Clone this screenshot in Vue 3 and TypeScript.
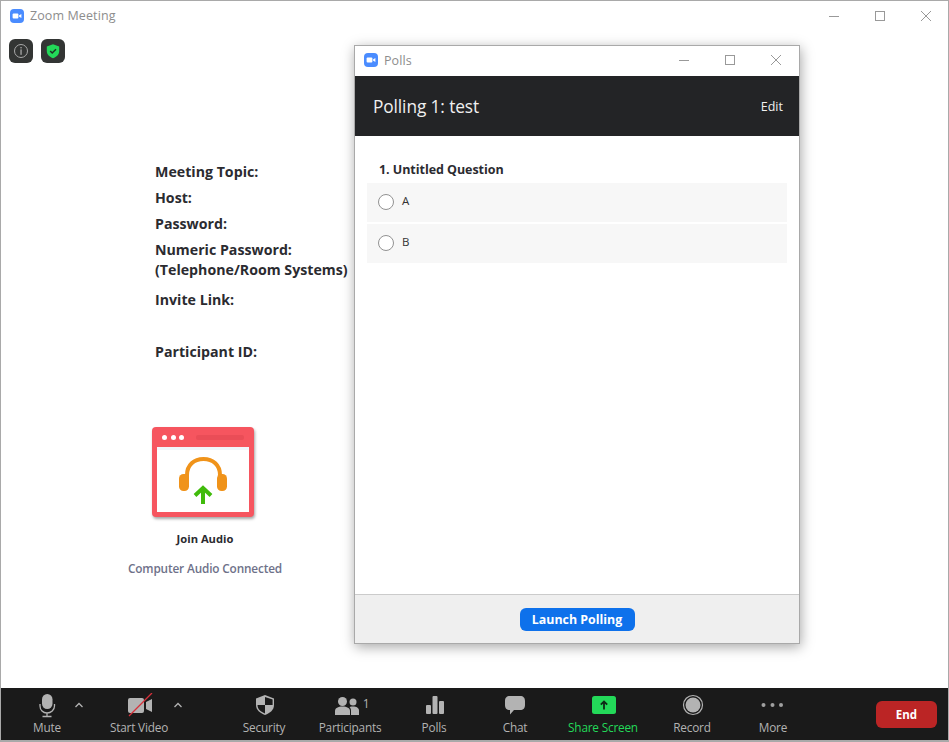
<script setup lang="ts">
const infoRows = [
  { text: 'Meeting Topic:', cls: 'r-topic' },
  { text: 'Host:', cls: 'r-std' },
  { text: 'Password:', cls: 'r-std' },
  { text: 'Numeric Password:', cls: 'r-std' },
  { text: '(Telephone/Room Systems)', cls: 'r-tel' },
  { text: 'Invite Link:', cls: 'r-invite' },
  { text: 'Participant ID:', cls: 'r-part' },
]
const options = ['A', 'B']
</script>

<template>
  <div class="win">
    <header class="titlebar">
      <svg class="logo" viewBox="0 0 14 14"><rect width="14" height="14" rx="4" fill="#4a8cff"/><rect x="2.6" y="4.6" width="5.8" height="4.8" rx="1" fill="#fff"/><path d="M9 6.6 11.4 4.9V9.1L9 7.4Z" fill="#fff"/></svg>
      <span class="title">Zoom Meeting</span>
      <div class="controls main-controls">
        <svg viewBox="0 0 46 14" width="46" height="14"><path d="M18 7.5H28" stroke="#999" fill="none"/></svg>
        <svg viewBox="0 0 46 14" width="46" height="14"><rect x="18.5" y="2.5" width="9" height="9" stroke="#999" fill="none"/></svg>
        <svg viewBox="0 0 46 14" width="46" height="14"><path d="M18 2 28 12M28 2 18 12" stroke="#999" fill="none"/></svg>
      </div>
    </header>

    <main class="canvas">
      <div class="badges">
        <div class="badge">
          <svg viewBox="0 0 24 24" width="24" height="24"><circle cx="12" cy="12" r="6.5" fill="none" stroke="#a9a9a9"/><rect x="11.4" y="8" width="1.3" height="1.4" fill="#a9a9a9"/><rect x="11.4" y="10.4" width="1.3" height="5.4" fill="#a9a9a9"/></svg>
        </div>
        <div class="badge">
          <svg viewBox="0 0 24 24" width="24" height="24"><path d="M12 5.2 18.2 7.4V12c0 3.6-2.7 6-6.2 7.2C8.5 18 5.8 15.6 5.8 12V7.4Z" fill="#23d959"/><path d="M9.2 12 11.2 14 15 10.3" stroke="#1d3324" stroke-width="1.5" fill="none"/></svg>
        </div>
      </div>

      <section class="info">
        <div v-for="r in infoRows" :key="r.text" class="info-row" :class="r.cls">{{ r.text }}</div>
      </section>

      <section class="audio">
        <div class="audio-icon">
          <div class="audio-top">
            <i class="dot"></i><i class="dot"></i><i class="dot"></i><i class="audio-bar"></i>
          </div>
          <div class="audio-body">
            <svg viewBox="0 0 92 65" width="92" height="65">
              <path d="M30 32V28C30 18 37 12 46.5 12S63 18 63 28V32" fill="none" stroke="#f0931a" stroke-width="4"/>
              <rect x="22" y="27" width="10" height="17" rx="4.5" fill="#f0931a"/>
              <rect x="60" y="27" width="10" height="17" rx="4.5" fill="#f0931a"/>
              <path d="M46 57V41M38 48.5 46 41 54 48.5" fill="none" stroke="#40bb0b" stroke-width="4"/>
            </svg>
          </div>
        </div>
        <div class="join">Join Audio</div>
        <div class="connected">Computer Audio Connected</div>
      </section>
    </main>

    <footer class="toolbar">
      <button class="tool w-mute">
        <svg viewBox="0 0 30 26" width="30" height="26"><rect x="10" y="1" width="10.5" height="15" rx="5.2" fill="#b3b3b3"/><path d="M8 11V13C8 17 11 20 15 20S22.5 17 22.5 13V11M15 20V23M10.5 23.5H19.5" stroke="#b3b3b3" stroke-width="1.3" fill="none"/></svg>
        <span>Mute</span>
      </button>
      <div class="caret"><svg viewBox="0 0 10 6" width="10" height="6"><path d="M1.5 5 5 1.5 8.5 5" stroke="#b3b3b3" stroke-width="1.3" fill="none"/></svg></div>
      <button class="tool w-video">
        <svg viewBox="0 0 30 26" width="30" height="26"><rect x="4" y="5" width="16" height="15" rx="2" fill="#b3b3b3"/><path d="M22 9 28 6V19L22 16Z" fill="#b3b3b3"/><path d="M5 23 28 0" stroke="#d6303a" stroke-width="1.3"/></svg>
        <span>Start Video</span>
      </button>
      <div class="caret caret-v"><svg viewBox="0 0 10 6" width="10" height="6"><path d="M1.5 5 5 1.5 8.5 5" stroke="#b3b3b3" stroke-width="1.3" fill="none"/></svg></div>
      <button class="tool w-sec">
        <svg viewBox="0 0 30 26" width="30" height="26"><path d="M16 2 25 5.5V12C25 17 21 20 16 22C11 20 7 17 7 12V5.5Z" fill="#b3b3b3"/><path d="M16 3.9 23.6 6.6V12H16ZM16 12V20.4C12 18.9 8.5 16.5 8.5 12Z" fill="#1a1a1a"/></svg>
        <span>Security</span>
      </button>
      <button class="tool w-part">
        <span class="part-icon">
          <svg viewBox="0 0 26 20" width="26" height="20"><circle cx="8.5" cy="5.5" r="4.5" fill="#b3b3b3"/><circle cx="19" cy="6" r="3.5" fill="#b3b3b3"/><path d="M1 19V15C1 12 4 10.5 8.5 10.5S16 12 16 15V19Z" fill="#b3b3b3"/><path d="M17 19V15C17 13 16.5 12 15.5 11C17 10.5 18 10.5 19 10.5C22.5 10.5 25 12 25 14.5V19Z" fill="#b3b3b3"/></svg>
          <em>1</em>
        </span>
        <span>Participants</span>
      </button>
      <button class="tool w-polls">
        <svg viewBox="0 0 30 26" width="30" height="26"><rect x="7" y="12" width="5" height="9" rx="1" fill="#b3b3b3"/><rect x="13.5" y="3" width="5" height="18" rx="1" fill="#b3b3b3"/><rect x="20" y="8" width="5" height="13" rx="1" fill="#b3b3b3"/></svg>
        <span>Polls</span>
      </button>
      <button class="tool w-chat">
        <svg viewBox="0 0 30 26" width="30" height="26"><path d="M10 3H20C23.5 3 25 5 25 8V12C25 15 23.5 17 20 17H14L10 21.5V17C6.5 17 5 15 5 12V8C5 5 6.5 3 10 3Z" fill="#b3b3b3"/></svg>
        <span>Chat</span>
      </button>
      <button class="tool w-share share">
        <svg viewBox="0 0 30 26" width="30" height="26"><rect x="4" y="3" width="24" height="18" rx="2.5" fill="#23d959"/><path d="M16 16.5V8.5M12.8 11.7 16 8.5 19.2 11.7" stroke="#0f2a17" stroke-width="1.8" fill="none"/></svg>
        <span>Share Screen</span>
      </button>
      <button class="tool w-rec">
        <svg viewBox="0 0 30 26" width="30" height="26"><circle cx="16" cy="12" r="9.5" fill="none" stroke="#b3b3b3" stroke-width="1.2"/><circle cx="16" cy="12" r="7.5" fill="#b3b3b3"/></svg>
        <span>Record</span>
      </button>
      <button class="tool w-more">
        <svg viewBox="0 0 30 26" width="30" height="26"><circle cx="5.5" cy="12" r="2" fill="#a0a0a0"/><circle cx="14.5" cy="12" r="2" fill="#a0a0a0"/><circle cx="23" cy="12" r="2" fill="#a0a0a0"/></svg>
        <span>More</span>
      </button>
      <button class="end">End</button>
    </footer>

    <div class="polls">
      <header class="polls-title">
        <svg class="logo" viewBox="0 0 14 14"><rect width="14" height="14" rx="4" fill="#4a8cff"/><rect x="2.6" y="4.6" width="5.8" height="4.8" rx="1" fill="#fff"/><path d="M9 6.6 11.4 4.9V9.1L9 7.4Z" fill="#fff"/></svg>
        <span class="title">Polls</span>
        <div class="controls">
          <svg viewBox="0 0 46 14" width="46" height="14"><path d="M18 7.5H28" stroke="#999" fill="none"/></svg>
          <svg viewBox="0 0 46 14" width="46" height="14"><rect x="18.5" y="2.5" width="9" height="9" stroke="#999" fill="none"/></svg>
          <svg viewBox="0 0 46 14" width="46" height="14"><path d="M18 2 28 12M28 2 18 12" stroke="#999" fill="none"/></svg>
        </div>
      </header>
      <div class="polls-head">
        <h1>Polling 1: test</h1>
        <span class="edit">Edit</span>
      </div>
      <div class="polls-body">
        <div class="question">1. Untitled Question</div>
        <label v-for="o in options" :key="o" class="option">
          <i class="radio"></i>
          <span>{{ o }}</span>
        </label>
      </div>
      <div class="polls-foot">
        <button class="launch">Launch Polling</button>
      </div>
    </div>
  </div>
</template>

<style>
html, body { margin: 0; padding: 0; background: #fff; }
</style>

<style scoped>
* { box-sizing: border-box; }
.win {
  position: relative;
  width: 949px;
  height: 742px;
  display: flex;
  flex-direction: column;
  background: #fff;
  border: 1px solid #a9a9a9;
  border-bottom-width: 2px;
  font-family: "Open Sans", "Noto Sans", sans-serif;
  overflow: hidden;
}
.win::before {
  content: "";
  position: absolute;
  left: -1px;
  top: 189px;
  width: 1px;
  height: 41px;
  background: #55565a;
}
.titlebar {
  height: 29px;
  flex: none;
  display: flex;
  align-items: center;
  padding-left: 9px;
}
.logo { width: 14px; height: 14px; flex: none; }
.title {
  margin-left: 6px;
  font-size: 12.5px;
  letter-spacing: 0.1px;
  color: #8d8d8d;
}
.controls {
  margin-left: auto;
  display: flex;
}
.main-controls { margin-right: -1px; }
.controls svg { display: block; flex: none; }
.canvas { flex: 1; min-height: 0; padding: 9px 0 0 8px; }
.badges { display: flex; gap: 8px; }
.badge {
  width: 24px;
  height: 24px;
  border-radius: 6px;
  background: #333534;
}
.badge svg { display: block; }
.info {
  margin: 99px 0 0 146px;
  font-size: 14.2px;
  font-weight: 700;
  color: #2b2b30;
}
.info-row { height: 20px; line-height: 20px; white-space: nowrap; }
.r-std { margin-top: 6px; }
.r-tel { margin-top: 0; }
.r-invite { margin-top: 10px; }
.r-part { margin-top: 32px; }
.audio {
  margin: 65px 0 0 96px;
  width: 200px;
  display: flex;
  flex-direction: column;
  align-items: center;
}
.audio-icon {
  width: 102px;
  height: 90px;
  margin-right: 4px;
  background: #f6555f;
  border-radius: 4px;
  padding: 0 5px 5px;
  display: flex;
  flex-direction: column;
  box-shadow: 1px 2px 3px rgba(0, 0, 0, 0.35);
}
.audio-top {
  height: 20px;
  display: flex;
  align-items: center;
  gap: 3.5px;
  padding-left: 5px;
}
.dot { width: 5px; height: 5px; border-radius: 50%; background: #fff; }
.audio-bar {
  margin-left: 8px;
  width: 48px;
  height: 5px;
  border-radius: 2px;
  background: #ea4d57;
}
.audio-body { flex: 1; background: #fff; border-top: 3px solid #f1f5fb; }
.audio-body svg { display: block; margin-top: -3px; }
.join {
  margin-top: 12px;
  font-size: 11.2px;
  font-weight: 700;
  line-height: 20px;
  color: #2b2b30;
}
.connected {
  margin-top: 9px;
  font-size: 11.8px;
  font-weight: 600;
  line-height: 20px;
  color: #6e7189;
  letter-spacing: -0.15px;
  white-space: nowrap;
}
.toolbar {
  height: 52px;
  flex: none;
  display: flex;
  align-items: stretch;
  background: #1a1a1a;
  padding-left: 19px;
}
.tool {
  flex: none;
  padding: 5px 0 0;
  border: 0;
  background: none;
  display: flex;
  flex-direction: column;
  align-items: center;
  font-family: inherit;
  font-size: 11.8px;
  letter-spacing: -0.2px;
  color: #b3b3b3;
  white-space: nowrap;
}
.tool > svg, .part-icon { height: 26px; flex: none; display: block; }
.tool > span:last-child { line-height: 16px; }
.caret { width: 10px; flex: none; padding-top: 14px; }
.caret svg { display: block; }
.caret-v { width: 8px; margin-left: -1px; margin-right: 1px; }
.w-mute { width: 54px; }
.w-video { width: 70px; margin-left: 20px; }
.w-sec { width: 100px; margin-left: 32px; }
.w-part { width: 72px; }
.w-polls { width: 96px; }
.w-chat { width: 66px; }
.w-share { width: 110px; }
.w-rec { width: 68px; }
.w-more { width: 94px; }
.share { color: #23d959; }
.part-icon { display: flex; align-items: center; gap: 3px; padding-left: 3px; }
.part-icon em { font-style: normal; font-size: 12px; margin-top: -6px; }
.end {
  margin: 13px 11px 12px auto;
  width: 61px;
  border: 0;
  border-radius: 6px;
  background: #bb2525;
  color: #fff;
  font-family: inherit;
  font-size: 11.5px;
  font-weight: 700;
  padding: 0;
}
.polls {
  position: absolute;
  left: 353px;
  top: 44px;
  width: 446px;
  height: 599px;
  display: flex;
  flex-direction: column;
  background: #fff;
  border: 1px solid #a9a9a9;
  box-shadow: 1px 3px 12px rgba(0, 0, 0, 0.35);
}
.polls-title {
  height: 30px;
  flex: none;
  display: flex;
  align-items: center;
  padding: 0 0 2px 9px;
}
.polls-head {
  height: 60px;
  flex: none;
  display: flex;
  align-items: center;
  justify-content: space-between;
  padding: 0 16px 0 18px;
  background: #232426;
  color: #f0f0f0;
}
.polls-head h1 {
  margin: 0;
  font-size: 17.3px;
  font-weight: 400;
  letter-spacing: -0.1px;
}
.edit { font-size: 12.5px; }
.polls-body { flex: 1; min-height: 0; padding: 24px 12px 0; }
.question {
  padding-left: 12px;
  height: 20px;
  line-height: 20px;
  font-size: 12.5px;
  font-weight: 700;
  letter-spacing: -0.05px;
  color: #2b2b30;
  margin-bottom: 3px;
}
.option {
  display: flex;
  align-items: center;
  gap: 8px;
  height: 39px;
  padding: 0 0 1px 11px;
  margin-bottom: 2px;
  background: #f7f7f7;
  font-size: 11.5px;
  color: #333;
}
.option span { margin-top: -3px; }
.radio {
  width: 16px;
  height: 16px;
  border-radius: 50%;
  border: 1px solid #929292;
  background: #fff;
}
.polls-foot {
  height: 49px;
  flex: none;
  display: flex;
  align-items: center;
  justify-content: center;
  padding-top: 1px;
  background: #efefef;
  border-top: 1px solid #cbcbcb;
}
.launch {
  width: 115px;
  height: 23px;
  padding: 0;
  border: 0;
  border-radius: 6px;
  background: #0e71eb;
  color: #fff;
  font-family: inherit;
  font-size: 12.4px;
  font-weight: 700;
}
</style>
